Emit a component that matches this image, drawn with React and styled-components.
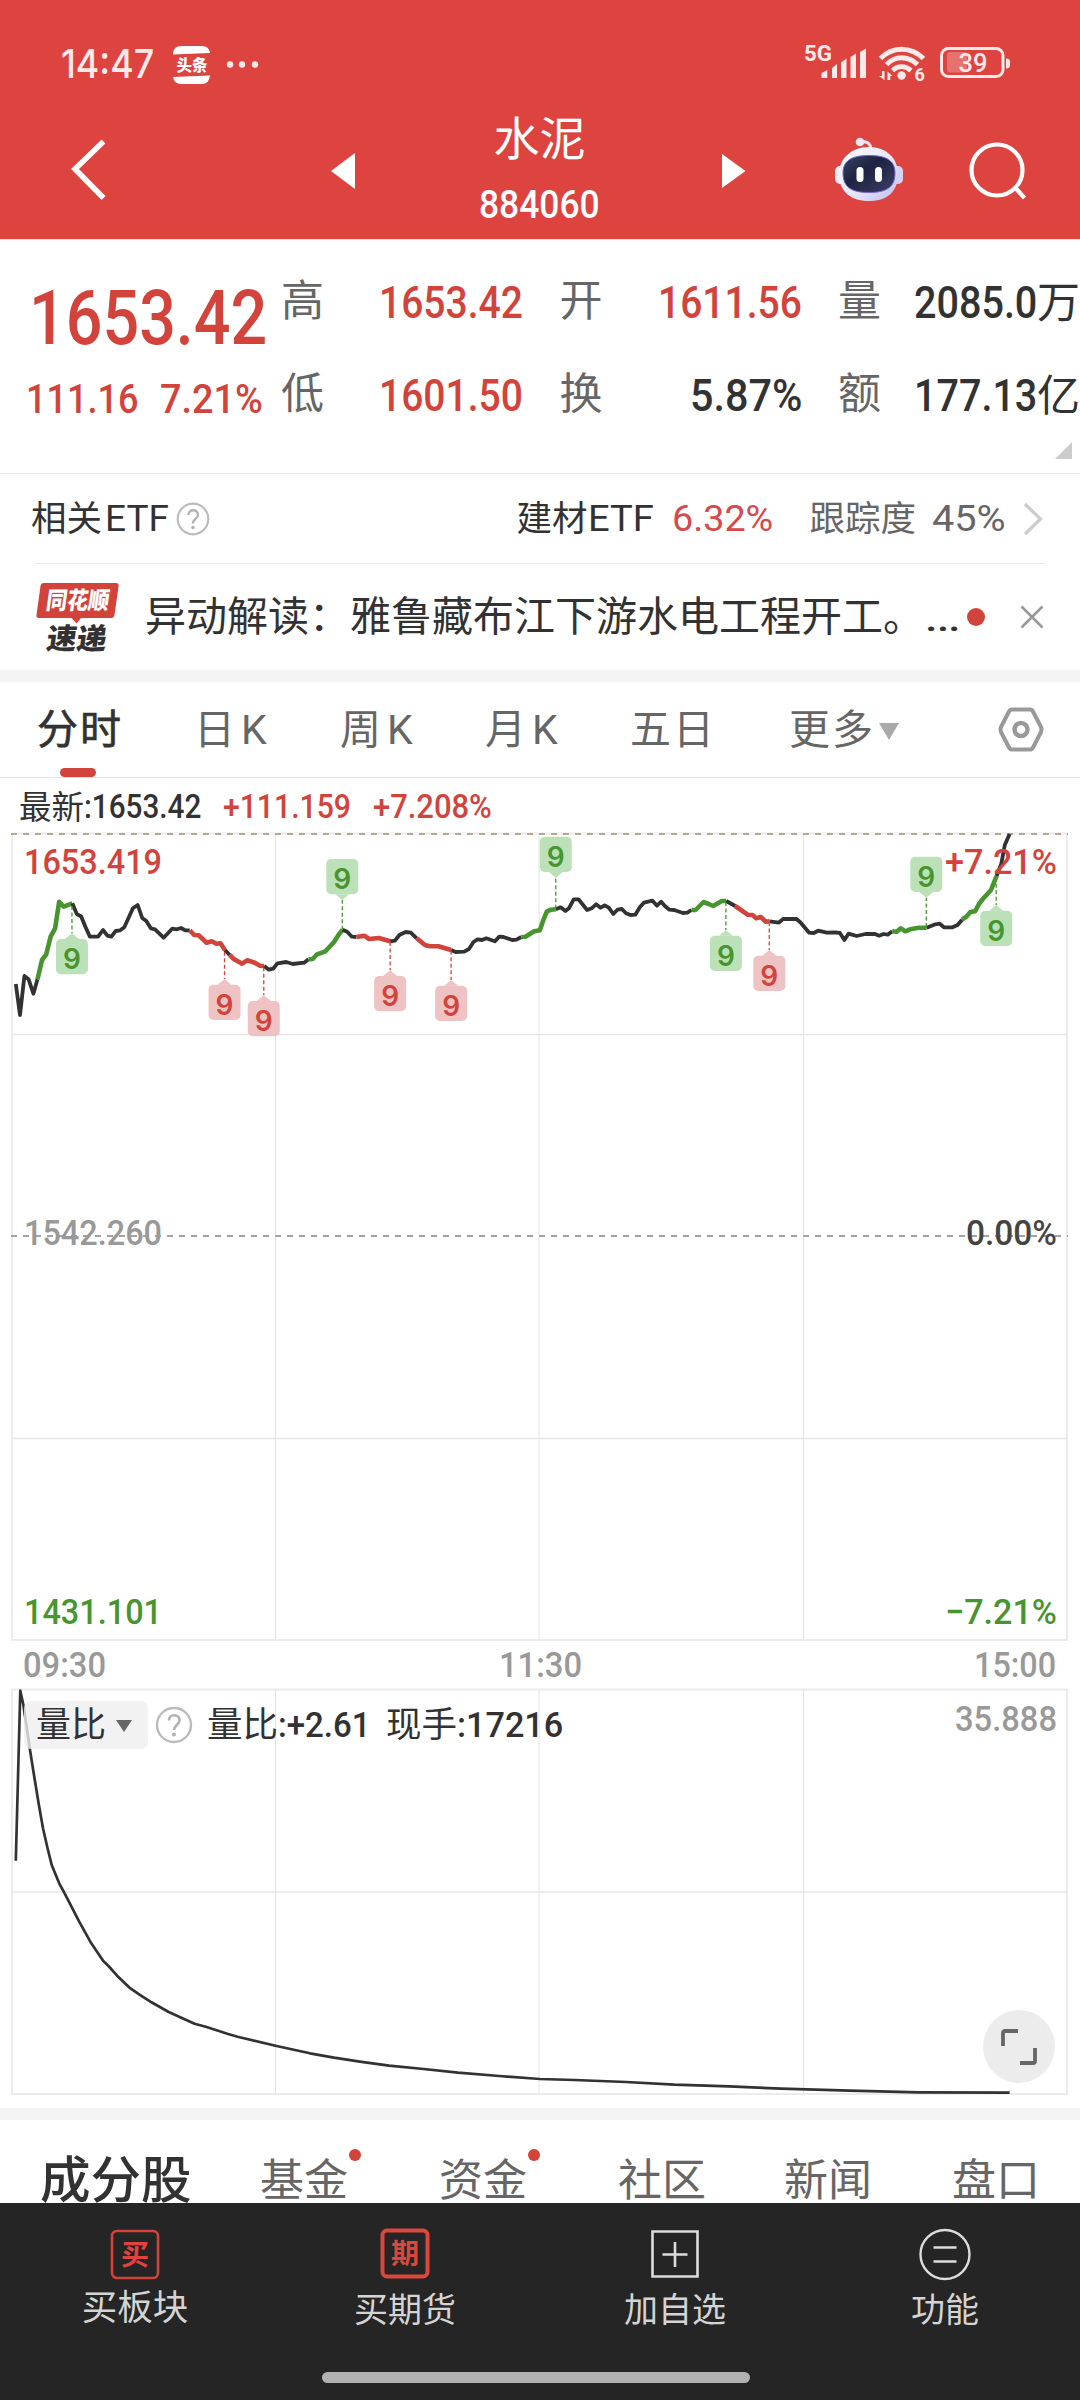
import React, { useLayoutEffect, useRef, useState } from "react"
import styled, { createGlobalStyle } from "styled-components"

const red = "#d2433b"
const headerRed = "#dd4440"
const green = "#48952f"
const ink = "#323232"
const gray = "#666666"
const lightGray = "#999999"
const line = "#ebebeb"
const band = "#f4f4f4"

const GlobalStyle = createGlobalStyle`
  * {
    box-sizing: border-box;
  }
  body {
    margin: 0;
    background: #fff;
    font-family: Roboto, "Noto Sans CJK SC", sans-serif;
    color: ${ink};
  }
  svg {
    display: block;
    overflow: visible;
  }
  text {
    font-family: Roboto, "Noto Sans CJK SC", sans-serif;
  }
`

const Page = styled.div`
  width: 1080px;
  height: 2400px;
  display: flex;
  flex-direction: column;
  overflow: hidden;
  background: #fff;
`

/* ---------- condensed text ---------- */

const FitBox = styled.span`
  display: block;
  flex: none;
  white-space: nowrap;
  margin-left: ${p => p.$ml || 0}px;
  font-size: ${p => p.$size}px;
  line-height: ${p => p.$lh || Math.round(p.$size * 1.2)}px;
  font-weight: ${p => p.$weight || 500};
  color: ${p => p.$color || "inherit"};
  ${p => p.$inter && `font-family: Inter, "Noto Sans CJK SC", sans-serif;`}
`

const FitInner = styled.span`
  display: inline-block;
  transform-origin: left center;
`

// squeezes its text to the given width, the way a condensed face would look
function Fit({ w, children, ...rest }) {
  const ref = useRef(null)
  const [scale, setScale] = useState(1)
  useLayoutEffect(() => {
    setScale(w / ref.current.offsetWidth)
  }, [w])
  return (
    <FitBox style={{ width: w }} {...rest}>
      <FitInner ref={ref} style={{ transform: `scaleX(${scale})` }}>{children}</FitInner>
    </FitBox>
  )
}

/* ---------- header ---------- */

const Header = styled.header`
  height: 240px;
  flex: none;
  background: ${headerRed};
  border-bottom: 1px solid #f6dcdb;
  color: #fff;
`

const StatusBar = styled.div`
  height: 128px;
  padding: 0 68px 0 61px;
  display: flex;
  align-items: center;
  color: #fdeae9;
`

const StatusRight = styled.div`
  margin-left: auto;
`

const NavBar = styled.div`
  height: 111px;
  display: flex;
  align-items: flex-start;
  padding: 0 50px 0 68px;
`

const TitleBox = styled.div`
  width: 140px;
  margin: -18px 113px 0 115px;
  display: flex;
  flex-direction: column;
  align-items: center;
  gap: 8px;
`

const Title = styled.div`
  font-size: 46px;
  line-height: 58px;
`

const NavIcon = styled.div`
  margin: ${p => p.$m};
`

/* ---------- quote ---------- */

const Quote = styled.section`
  height: 233px;
  flex: none;
  display: flex;
  padding: 24px 0 0 0;
  position: relative;
`

const PriceBlock = styled.div`
  width: 281px;
  flex: none;
`

const Changes = styled.div`
  display: flex;
  margin-top: 7px;
`

const Stats = styled.div`
  display: grid;
  grid-template-columns: repeat(3, 242px);
  grid-auto-rows: 93px;
  column-gap: 36.5px;
  margin-top: -8px;
`

const Stat = styled.div`
  display: flex;
  align-items: center;
  justify-content: space-between;
  color: ${p => p.$color};
`

const StatLabel = styled.span`
  font-size: 43px;
  line-height: 54px;
  padding-bottom: 3px;
  color: ${gray};
`

const StatValue = styled.span`
  display: flex;
  align-items: center;
`

const Unit = styled.span`
  font-size: 43px;
  line-height: 54px;
`

const Corner = styled.i`
  position: absolute;
  right: 8px;
  bottom: 14px;
  border-style: solid;
  border-width: 0 0 17px 17px;
  border-color: transparent transparent #ccc transparent;
`

/* ---------- related etf + news ---------- */

const EtfRow = styled.section`
  height: 90px;
  flex: none;
  border-top: 1px solid ${line};
  display: flex;
  align-items: center;
  padding: 1px 36px 0 31px;
`

const EtfText = styled.span`
  font-size: 35.5px;
  line-height: 46px;
  margin-left: ${p => p.$ml || 0}px;
  color: ${p => p.$color || ink};
`

const Spacer = styled.div`
  flex: 1;
`

const NewsRow = styled.section`
  height: 107px;
  flex: none;
  margin: 0 36px;
  border-top: 1px solid ${line};
  display: flex;
  align-items: center;
`

const NewsText = styled.div`
  font-size: 41px;
  line-height: 54px;
  width: 822px;
  margin-left: 25px;
  white-space: nowrap;
`

const Ellipsis = styled.span`
  display: inline-block;
  transform: scaleX(1.35);
  transform-origin: left;
`

const Dot = styled.i`
  width: ${p => p.$size}px;
  height: ${p => p.$size}px;
  border-radius: 50%;
  background: ${red};
`

const Band = styled.div`
  height: 12px;
  flex: none;
  background: ${band};
`

/* ---------- chart tabs ---------- */

const ChartTabs = styled.nav`
  height: 96px;
  flex: none;
  border-bottom: 1px solid #e4e4e4;
  display: grid;
  grid-template-columns: 157px 146px 145px 145px 159px 209px auto;
  padding-left: 37px;
`

const ChartTab = styled.div`
  height: 95px;
  padding-top: 21px;
  font-size: 41px;
  line-height: 54px;
  letter-spacing: 2px;
  color: ${p => (p.$active ? ink : gray)};
  -webkit-text-stroke: ${p => (p.$active ? "0.7px" : "0")};
  display: flex;
  flex-wrap: wrap;
  align-content: flex-start;

  &::after {
    content: "";
    display: ${p => (p.$active ? "block" : "none")};
    width: 36px;
    height: 9px;
    border-radius: 5px;
    background: ${red};
    margin: 11px 40px 0 23px;
  }
`

const Period = styled.span`
  margin-left: 4px;
`

const Caret = styled.i`
  border-style: solid;
  border-width: ${p => p.$h}px ${p => p.$w / 2}px 0;
  border-color: ${p => p.$color} transparent transparent;
  margin: ${p => p.$m || 0};
`

const Latest = styled.div`
  height: 54px;
  flex: none;
  display: flex;
  align-items: center;
  padding: 5px 0 0 19px;
`

const LatestLabel = styled.span`
  font-size: 32.5px;
  line-height: 42px;
`

/* ---------- plots ---------- */

const PricePlot = styled.section`
  height: 810px;
  flex: none;
`

const TimeAxis = styled.div`
  height: 46px;
  flex: none;
  display: flex;
  justify-content: space-between;
  align-items: center;
  padding: 1px 24px 0 23px;
  color: ${lightGray};
`

const RatioPlot = styled.section`
  height: 420px;
  flex: none;
  position: relative;
`

const RatioHead = styled.div`
  position: absolute;
  top: 13px;
  left: 24px;
  right: 0;
  display: flex;
  align-items: center;
`

const Picker = styled.div`
  width: 124px;
  height: 48px;
  border-radius: 7px;
  background: rgba(239, 239, 239, 0.8);
  display: flex;
  align-items: center;
  padding: 1px 0 0 12px;
  font-size: 35px;
  line-height: 48px;
  margin-right: 6px;
`

const HeadText = styled.span`
  font-size: 35.5px;
  line-height: 48px;
  margin-left: ${p => p.$ml || 0}px;
`

const Expand = styled.div`
  position: absolute;
  right: 25px;
  bottom: 25px;
  width: 72px;
  height: 73px;
  border-radius: 50%;
  background: #ececec;
  display: flex;
  align-items: center;
  justify-content: center;
`

/* ---------- bottom ---------- */

const InfoTabs = styled.nav`
  height: 83px;
  flex: none;
  overflow: hidden;
  display: grid;
  grid-template-columns: 220px 179px 179px 166px 168px auto;
  padding: 27px 0 0 40px;
`

const InfoTab = styled.div`
  display: flex;
  align-items: flex-start;
  font-size: ${p => (p.$active ? 50.5 : 44)}px;
  font-weight: ${p => (p.$active ? 500 : 400)};
  line-height: 68px;
  color: ${p => (p.$active ? ink : gray)};
  white-space: nowrap;

  ${Dot} {
    margin: 2px 0 0 1px;
  }
`

const BottomBar = styled.footer`
  height: 197px;
  flex: none;
  background: #252525;
`

const Actions = styled.div`
  height: 169px;
  display: grid;
  grid-template-columns: repeat(4, 1fr);
`

const Action = styled.div`
  padding-top: 25px;
  display: flex;
  flex-direction: column;
  align-items: center;
  font-size: ${p => p.$size || 34}px;
  line-height: 48px;
  color: #d4d4d4;

  svg {
    margin-bottom: ${p => p.$gap || 6}px;
  }
`

const HomeBar = styled.div`
  width: 428px;
  height: 11px;
  border-radius: 6px;
  background: #b2b2b2;
  margin: 0 auto 0 322px;
`

/* ---------- icons ---------- */

const ToutiaoIcon = () => (
  <svg width="90" height="38" viewBox="0 0 90 38">
    <path d="M0 8.500V7Q1 0 8 0H29Q36 0 37 7L12 8ZM0 31L37 29.500Q36 38 29 38H8Q1 38 0 31Z" fill="#fff" />
    <text x="3.500" y="25" fontSize="15.500" fontWeight="900" fill="#fff">头条</text>
    <circle cx="57" cy="18.500" r="3.200" fill="#fdeae9" />
    <circle cx="69" cy="18.500" r="3.200" fill="#fdeae9" />
    <circle cx="82" cy="18.500" r="3.200" fill="#fdeae9" />
  </svg>
)

const StatusIcons = () => (
  <svg width="208" height="42" viewBox="804 44 208 42" fill="#fdeae9">
    <text x="804" y="61.500" fontSize="22" fontWeight="700" textLength="28" lengthAdjust="spacingAndGlyphs">5G</text>
    <path d="M821.500 74l5.800-3v8h-5.800zM832 69l5-4v14h-5zM841 63.500l5.500-4v19.500H841zM850.500 58l5.500-3.500V79h-5.500zM860 53l6-3.500V79h-6z" />
    <g fill="none" stroke="#fdeae9" strokeWidth="5">
      <path d="M880.500 59.500C892 47 911 47 923.500 59.500" />
      <path d="M886.500 65.500C895 56.500 908 56.500 917.500 65.500" />
      <path d="M892.500 71.500C898 66.500 905 66.500 911 71.500" />
    </g>
    <circle cx="901.600" cy="76.500" r="4.200" />
    <path d="M884.500 72v9l-5.500-4h3V72zM887.500 81v-8.500l5 4.500h-2.200v4z" />
    <text x="914.500" y="82" fontSize="18" fontWeight="700">6</text>
    <rect x="941.500" y="49.500" width="61.500" height="28" rx="7" fill="none" stroke="#fdeae9" strokeWidth="3" />
    <rect x="947" y="53" width="20" height="20.500" rx="3" opacity=".28" />
    <path d="M1006 59.500q4 0 4 3v4q0 3-4 3z" />
    <text x="958.500" y="73" fontSize="25.500" fontWeight="500" textLength="29">39</text>
  </svg>
)

const RobotIcon = () => (
  <svg width="70" height="66" viewBox="0 0 70 66">
    <defs>
      <linearGradient id="shell" x1="0" y1="0" x2="1" y2="1">
        <stop offset="0" stopColor="#fff" />
        <stop offset=".6" stopColor="#e6e3f8" />
        <stop offset="1" stopColor="#b9bce9" />
      </linearGradient>
      <linearGradient id="visor" x1="0" y1="0" x2="1" y2="1">
        <stop offset="0" stopColor="#3b4568" />
        <stop offset=".4" stopColor="#1d2340" />
        <stop offset="1" stopColor="#3c3f68" />
      </linearGradient>
    </defs>
    <path d="M26 5Q36 3 37 12" fill="none" stroke="#f0e6f4" strokeWidth="3" />
    <circle cx="26" cy="5" r="4.300" fill="#f3e6f2" />
    <rect x="1" y="29" width="12" height="18" rx="5" fill="#e9ecfb" />
    <rect x="57" y="29" width="12" height="18" rx="5" fill="#d5d3f3" />
    <path d="M35 10C53 10 64 22 64 37C64 54 54 64 35 64C16 64 5 54 5 37C5 22 17 10 35 10Z" fill="url(#shell)" />
    <path d="M35 18.500C53 18.500 61 24 61 36C61 50 53 55.500 35 55.500C17 55.500 9 50 9 36C9 24 17 18.500 35 18.500Z" fill="url(#visor)" stroke="#7467cf" strokeWidth="1" />
    <rect x="22.500" y="30" width="7" height="15" rx="3.500" fill="#fff" />
    <rect x="41" y="30" width="7" height="15" rx="3.500" fill="#fff" />
  </svg>
)

const Help = ({ r }) => (
  <svg width={r * 2 + 4} height={r * 2 + 4} viewBox="-20 -20 40 40">
    <circle r="17" fill="none" stroke="#bbb" strokeWidth="2.400" />
    <path d="M-5-4.500C-5-11.500 5.500-11.500 5.500-4.500C5.500-.500 0 0 0 5" fill="none" stroke="#b2b2b2" strokeWidth="2.600" />
    <circle cy="9.500" r="2" fill="#b2b2b2" />
  </svg>
)

const BrandLogo = () => (
  <svg width="84" height="70" viewBox="0 0 84 70">
    <path d="M7.500 1H80Q83 1 82.600 4L78.500 33Q78 36 75 36H45L40.500 41.500L35.500 36H3Q0 36 .500 33L4.500 4Q5 1 7.500 1Z" fill={red} />
    <g transform="skewX(-8)">
      <text x="13" y="27.500" fontSize="24" fontWeight="900" fill="#fff" textLength="63" lengthAdjust="spacingAndGlyphs">同花顺</text>
      <text x="19" y="67" fontSize="29" fontWeight="900" fill={ink} textLength="60" lengthAdjust="spacingAndGlyphs">速递</text>
    </g>
  </svg>
)

/* ---------- chart data ---------- */

// [colour, x, y, x, y ...] runs of the intraday line
const priceRuns = [
  [ink, 46, 492, 58, 585, 71, 468, 83, 478, 97, 521, 109, 478],
  [green, 109, 478, 122, 420, 134, 404, 147, 350, 160, 325, 172, 245, 185, 260, 210, 250],
  [ink, 210, 250, 223, 282, 236, 290, 248, 320, 261, 350, 285, 350, 299, 330, 312, 347, 323, 350, 336, 333, 349, 331, 361, 322, 386, 265, 400, 255, 413, 294, 425, 303, 438, 325, 450, 328, 475, 353, 500, 326, 513, 328, 526, 324, 538, 331, 551, 331],
  [red, 551, 331, 564, 345, 577, 346, 600, 368, 615, 364, 628, 371, 640, 370, 653, 390],
  [ink, 653, 390, 667, 405],
  [red, 667, 405, 680, 418, 703, 431, 718, 421, 740, 428, 755, 437, 767, 438],
  [ink, 767, 438, 781, 449, 793, 446, 806, 430, 831, 426, 850, 432, 883, 428, 896, 418],
  [green, 896, 418, 908, 417, 921, 403, 945, 394, 970, 366, 983, 345, 995, 329],
  [ink, 995, 329, 1008, 335, 1022, 350, 1035, 351],
  [red, 1035, 351, 1058, 347, 1072, 357, 1100, 354, 1133, 364],
  [ink, 1133, 364, 1147, 362, 1160, 345, 1178, 336, 1193, 338, 1210, 355],
  [red, 1210, 355, 1235, 376, 1250, 379, 1273, 379, 1310, 390],
  [ink, 1310, 390, 1323, 396, 1348, 395, 1362, 387, 1375, 366, 1387, 358, 1400, 360, 1412, 355, 1437, 364, 1450, 350, 1462, 351, 1487, 360, 1500, 359, 1514, 351],
  [green, 1514, 351, 1526, 350, 1551, 334, 1568, 331, 1576, 305, 1588, 275, 1600, 269, 1614, 268],
  [ink, 1614, 268, 1628, 262, 1642, 273, 1652, 265, 1666, 238, 1680, 238, 1705, 270, 1718, 265, 1731, 253, 1744, 263, 1756, 256, 1768, 263, 1781, 282, 1793, 269, 1806, 267, 1818, 280, 1831, 285, 1845, 284, 1858, 262, 1870, 248, 1895, 242, 1908, 257, 1920, 245, 1931, 258, 1944, 269, 1958, 270, 1983, 279, 1996, 278, 2008, 270],
  [green, 2008, 270, 2020, 270, 2043, 246, 2058, 252, 2071, 258, 2096, 243, 2109, 243],
  [ink, 2109, 243, 2135, 258],
  [red, 2135, 258, 2171, 284, 2185, 285, 2196, 295, 2210, 291, 2223, 305, 2235, 304],
  [ink, 2235, 304, 2261, 308, 2274, 297, 2313, 297, 2324, 307, 2350, 338, 2363, 339, 2376, 332, 2401, 338, 2426, 337, 2439, 339, 2452, 360, 2464, 341, 2488, 348, 2513, 342, 2541, 342, 2553, 347, 2566, 342, 2578, 344, 2591, 334],
  [green, 2591, 334, 2604, 335, 2616, 325, 2629, 334, 2643, 328, 2668, 323, 2691, 323],
  [ink, 2691, 323, 2716, 313, 2729, 311, 2741, 322, 2766, 322, 2781, 315, 2794, 299],
  [green, 2794, 299, 2806, 290, 2818, 276, 2832, 274, 2843, 252, 2854, 237, 2878, 210, 2894, 168],
  [ink, 2894, 168, 2908, 130, 2918, 75, 2932, 42],
]

const ratioRun = [
  46, 842, 59, 332, 68, 375, 87, 510, 98, 580, 112, 670, 125, 745, 137, 800, 150, 855, 162, 885, 172, 910, 185, 935,
  200, 965, 230, 1025, 265, 1090, 300, 1143, 315, 1158, 340, 1187, 375, 1222, 405, 1244, 440, 1267, 490, 1296,
  565, 1331, 600, 1341, 660, 1361, 690, 1370, 800, 1397, 900, 1420, 970, 1433, 1045, 1445, 1130, 1457,
  1230, 1467, 1330, 1478, 1450, 1488, 1568, 1497, 1668, 1500, 1818, 1506, 1958, 1514, 2118, 1519, 2268, 1526,
  2468, 1532, 2668, 1537, 2932, 1538,
]

// x, y on the line, tip of the flag, whether the flag hangs below
const flags = [
  { x: 209, from: 258, tip: 340, below: true, color: green },
  { x: 652, from: 395, tip: 477, below: true, color: red },
  { x: 766, from: 442, tip: 526, below: true, color: red },
  { x: 994, from: 329, tip: 240, below: false, color: green },
  { x: 1133, from: 366, tip: 451, below: true, color: red },
  { x: 1310, from: 392, tip: 480, below: true, color: red },
  { x: 1614, from: 266, tip: 173, below: false, color: green },
  { x: 2108, from: 246, tip: 330, below: true, color: green },
  { x: 2234, from: 306, tip: 390, below: true, color: red },
  { x: 2690, from: 321, tip: 233, below: false, color: green },
  { x: 2893, from: 172, tip: 255, below: true, color: green },
]

const sx = v => v / 2.904
const priceY = v => v / 3 - 12
const ratioY = v => v / 3 - 108

const toPoints = (values, toY) => {
  const out = []
  for (let i = 0; i < values.length; i += 2) {
    out.push(`${sx(values[i]).toFixed(1)},${toY(values[i + 1]).toFixed(1)}`)
  }
  return out.join(" ")
}

function Flag({ x, from, tip, below, color }) {
  const cx = sx(x)
  const ty = priceY(tip)
  const top = below ? ty + 5.700 : ty - 41
  const dir = below ? 1 : -1
  return (
    <g>
      <line x1={cx} x2={cx} y1={priceY(from)} y2={ty} stroke={color} strokeWidth="1.300" strokeDasharray="4 2.500" />
      <g fill={color === green ? "#bce1b8" : "#ecb8b8"} fillOpacity={color === green ? 1 : 0.85}>
        <path d={`M${cx - 7} ${ty + 5.700 * dir}L${cx} ${ty}L${cx + 7} ${ty + 5.700 * dir}Z`} />
        <rect x={cx - 16} y={top} width="32" height="35.300" rx="5" />
      </g>
      <text x={cx} y={top + 30} textAnchor="middle" fontSize="28" fontWeight="600" fill={color} style={{ fontFamily: "Inter" }}>9</text>
    </g>
  )
}

function Grid({ height, rows }) {
  return (
    <g stroke={line}>
      <rect x="12" y="1.500" width="1055" height={height} fill="none" strokeWidth="2" />
      {[275.500, 539, 803.500].map(x => (
        <line key={x} x1={x} x2={x} y1="1" y2={height + 1} stroke="#e4e4e4" />
      ))}
      {rows.map(y => (
        <line key={y} x1="12" x2="1067" y1={y} y2={y} strokeWidth="1.500" stroke="#e6e6e6" />
      ))}
    </g>
  )
}

function AxisLabel({ x, y, w, fill, children }) {
  return (
    <text x={x} y={y} textLength={w} lengthAdjust="spacingAndGlyphs" fontSize="35.500" fontWeight="500" fill={fill}>
      {children}
    </text>
  )
}

const stats = [
  ["高", "1653.42", 144, red],
  ["开", "1611.56", 144, red],
  ["量", "2085.0", 123, ink, "万"],
  ["低", "1601.50", 144, red],
  ["换", "5.87%", 112, ink],
  ["额", "177.13", 123, ink, "亿"],
]

const infoTabs = [
  ["成分股"],
  ["基金", true],
  ["资金", true],
  ["社区"],
  ["新闻"],
  ["盘口"],
]

export default function App() {
  return (
    <Page>
      <GlobalStyle />

      <Header>
        <StatusBar>
          <Fit w={93} $size={40} $inter>14:47</Fit>
          <NavIcon $m="2px 0 0 19px"><ToutiaoIcon /></NavIcon>
          <StatusRight><StatusIcons /></StatusRight>
        </StatusBar>
        <NavBar>
          <NavIcon $m="10px 0 0">
            <svg width="40" height="62" viewBox="0 0 40 62">
              <path d="M35.500 3.500L7 31L35.500 60" fill="none" stroke="#fff" strokeWidth="5.500" />
            </svg>
          </NavIcon>
          <NavIcon $m="25px 0 0 223px">
            <svg width="24" height="36"><path d="M24 0V36L0 18Z" fill="#fff" /></svg>
          </NavIcon>
          <TitleBox>
            <Title>水泥</Title>
            <Fit w={121} $size={39.5} $lh={58}>884060</Fit>
          </TitleBox>
          <NavIcon $m="26px 0 0 0">
            <svg width="24" height="34"><path d="M0 0V34L23.500 17Z" fill="#fff" /></svg>
          </NavIcon>
          <NavIcon $m="9px 0 0 88px"><RobotIcon /></NavIcon>
          <NavIcon $m="12px 0 0 62px">
            <svg width="64" height="64" viewBox="0 0 64 64" fill="none" stroke="#fff" strokeWidth="4.200">
              <circle cx="31" cy="30" r="25.500" />
              <path d="M49 47.500L58.500 58" />
            </svg>
          </NavIcon>
        </NavBar>
      </Header>

      <Quote>
        <PriceBlock>
          <Fit w={238} $ml={29} $size={76} $lh={108} $color={red}>1653.42</Fit>
          <Changes>
            <Fit w={112} $ml={26} $size={41.5} $lh={40} $color={red}>111.16</Fit>
            <Fit w={103} $ml={22} $size={41.5} $lh={40} $color={red}>7.21%</Fit>
          </Changes>
        </PriceBlock>
        <Stats>
          {stats.map(([label, value, w, color, unit]) => (
            <Stat key={label} $color={color}>
              <StatLabel>{label}</StatLabel>
              <StatValue>
                <Fit w={w} $size={45}>{value}</Fit>
                {unit && <Unit>{unit}</Unit>}
              </StatValue>
            </Stat>
          ))}
        </Stats>
        <Corner />
      </Quote>

      <EtfRow>
        <EtfText>相关</EtfText>
        <Fit w={64} $ml={3} $size={37} $weight={400}>ETF</Fit>
        <NavIcon $m="0 0 0 6px"><Help r={16} /></NavIcon>
        <Spacer />
        <EtfText>建材</EtfText>
        <Fit w={66} $ml={1} $size={37} $weight={400}>ETF</Fit>
        <Fit w={101} $ml={18} $size={37} $weight={400} $color="#d54a4d">6.32%</Fit>
        <EtfText $ml={36} $color={gray}>跟踪度</EtfText>
        <Fit w={74} $ml={16} $size={37} $weight={400} $color={gray}>45%</Fit>
        <NavIcon $m="0 0 0 16px">
          <svg width="22" height="34" viewBox="0 0 22 34">
            <path d="M3 2L18.500 17L3 32" fill="none" stroke="#ccc" strokeWidth="3.200" />
          </svg>
        </NavIcon>
      </EtfRow>

      <NewsRow>
        <BrandLogo />
        <NewsText>异动解读：雅鲁藏布江下游水电工程开工。<Ellipsis>…</Ellipsis></NewsText>
        <Dot $size={18} />
        <Spacer />
        <svg width="24" height="24" viewBox="0 0 24 24">
          <path d="M1.500 1.500L22.500 22.500M22.500 1.500L1.500 22.500" stroke="#999" strokeWidth="2.600" />
        </svg>
      </NewsRow>

      <Band />

      <ChartTabs>
        <ChartTab $active>分时</ChartTab>
        <ChartTab>日<Period>K</Period></ChartTab>
        <ChartTab>周<Period>K</Period></ChartTab>
        <ChartTab>月<Period>K</Period></ChartTab>
        <ChartTab>五日</ChartTab>
        <ChartTab>更多<Caret $w={21} $h={17} $color="#aaa" $m="20px 0 0 4px" /></ChartTab>
        <NavIcon $m="25px 0 0">
          <svg width="46" height="45" viewBox="0 0 46 45" fill="none" stroke="#999" strokeLinejoin="round">
            <path d="M14 2.500H32Q34 2.500 35 4.500L43 20Q44 22.500 43 25L35 40.500Q34 42.500 32 42.500H14Q12 42.500 11 40.500L3 25Q2 22.500 3 20L11 4.500Q12 2.500 14 2.500Z" strokeWidth="4" />
            <circle cx="23" cy="22.500" r="6.500" strokeWidth="4.500" />
          </svg>
        </NavIcon>
      </ChartTabs>

      <Latest>
        <LatestLabel>最新</LatestLabel>
        <Fit w={117} $ml={0} $size={32.5}>:1653.42</Fit>
        <Fit w={128} $ml={22} $size={32.5} $color={red}>+111.159</Fit>
        <Fit w={119} $ml={22} $size={32.5} $color={red}>+7.208%</Fit>
      </Latest>

      <PricePlot>
        <svg width="1080" height="810" viewBox="0 0 1080 810">
          <Grid height={806.5} rows={[202.5, 606.5]} />
          <line x1="11" x2="1068" y1="2" y2="2" stroke="#b9a888" strokeWidth="2" strokeDasharray="6 6" />
          <line x1="11" x2="1068" y1="404" y2="404" stroke="#a3a3a3" strokeWidth="2" strokeDasharray="6 6" />
          {priceRuns.map(([color, ...values], i) => (
            <polyline key={i} points={toPoints(values, priceY)} fill="none" stroke={color} strokeWidth={color === ink ? 3.8 : 4.6} strokeLinejoin="round" />
          ))}
          {flags.map(f => <Flag key={f.x} {...f} />)}
          <AxisLabel x={24} y={42} w={138} fill={red}>1653.419</AxisLabel>
          <AxisLabel x={945} y={42} w={112} fill={red}>+7.21%</AxisLabel>
          <AxisLabel x={24} y={413} w={138} fill={lightGray}>1542.260</AxisLabel>
          <AxisLabel x={966} y={413} w={91} fill="#444">0.00%</AxisLabel>
          <AxisLabel x={24} y={792} w={138} fill={green}>1431.101</AxisLabel>
          <AxisLabel x={945} y={792} w={112} fill={green}>−7.21%</AxisLabel>
        </svg>
      </PricePlot>

      <TimeAxis>
        <Fit w={83} $size={35.5}>09:30</Fit>
        <Fit w={83} $size={35.5}>11:30</Fit>
        <Fit w={82} $size={35.5}>15:00</Fit>
      </TimeAxis>

      <RatioPlot>
        <svg width="1080" height="420" viewBox="0 0 1080 420">
          <Grid height={404.5} rows={[204]} />
          <polyline points={toPoints(ratioRun, ratioY)} fill="none" stroke={ink} strokeWidth="2.700" strokeLinejoin="round" />
          <AxisLabel x={955} y={43} w={102} fill={lightGray}>35.888</AxisLabel>
        </svg>
        <RatioHead>
          <Picker>
            量比
            <Caret $w={17} $h={12} $color={gray} $m="0 0 0 10px" />
          </Picker>
          <Help r={18} />
          <HeadText $ml={13}>量比</HeadText>
          <Fit w={92} $ml={0} $size={35.5}>:+2.61</Fit>
          <HeadText $ml={16}>现手</HeadText>
          <Fit w={106} $ml={0} $size={35.5}>:17216</Fit>
        </RatioHead>
        <Expand>
          <svg width="38" height="38" viewBox="0 0 38 38" fill="none" stroke="#666" strokeWidth="3.800">
            <path d="M3 18V5Q3 3 5 3H18M35 20V33Q35 35 33 35H20" />
          </svg>
        </Expand>
      </RatioPlot>

      <Band />

      <InfoTabs>
        {infoTabs.map(([label, dot], i) => (
          <InfoTab key={label} $active={i === 0}>
            {label}
            {dot && <Dot $size={12} />}
          </InfoTab>
        ))}
      </InfoTabs>

      <BottomBar>
        <Actions>
          <Action $size={35.5} $gap={4}>
            <svg width="50" height="52" viewBox="0 0 50 52">
              <rect x="2" y="3" width="46" height="47" rx="5" fill="none" stroke="#d2433b" strokeWidth="2.600" />
              <text x="25" y="37" textAnchor="middle" fontSize="28" fontWeight="700" fill="#e0433f">买</text>
            </svg>
            买板块
          </Action>
          <Action>
            <svg width="50" height="52" viewBox="0 0 50 52">
              <rect x="2.500" y="2.500" width="45" height="46" rx="4.500" fill="none" stroke="#d9483c" strokeWidth="4" />
              <text x="25" y="36" textAnchor="middle" fontSize="28" fontWeight="700" fill="#d9483c">期</text>
            </svg>
            买期货
          </Action>
          <Action>
            <svg width="50" height="52" viewBox="0 0 50 52" fill="none" stroke="#dcdcdc" strokeWidth="2.600">
              <path d="M2.500 3.500H47.500V48.500H2.500ZM25 14V39M12.500 26.500H37.500" />
            </svg>
            加自选
          </Action>
          <Action>
            <svg width="52" height="52" viewBox="0 0 52 52" fill="none" stroke="#dcdcdc" strokeWidth="2.400">
              <circle cx="26" cy="26.500" r="24.500" />
              <path d="M14.500 19.500H37.500M14.500 33.500H37.500" />
            </svg>
            功能
          </Action>
        </Actions>
        <HomeBar />
      </BottomBar>
    </Page>
  )
}
